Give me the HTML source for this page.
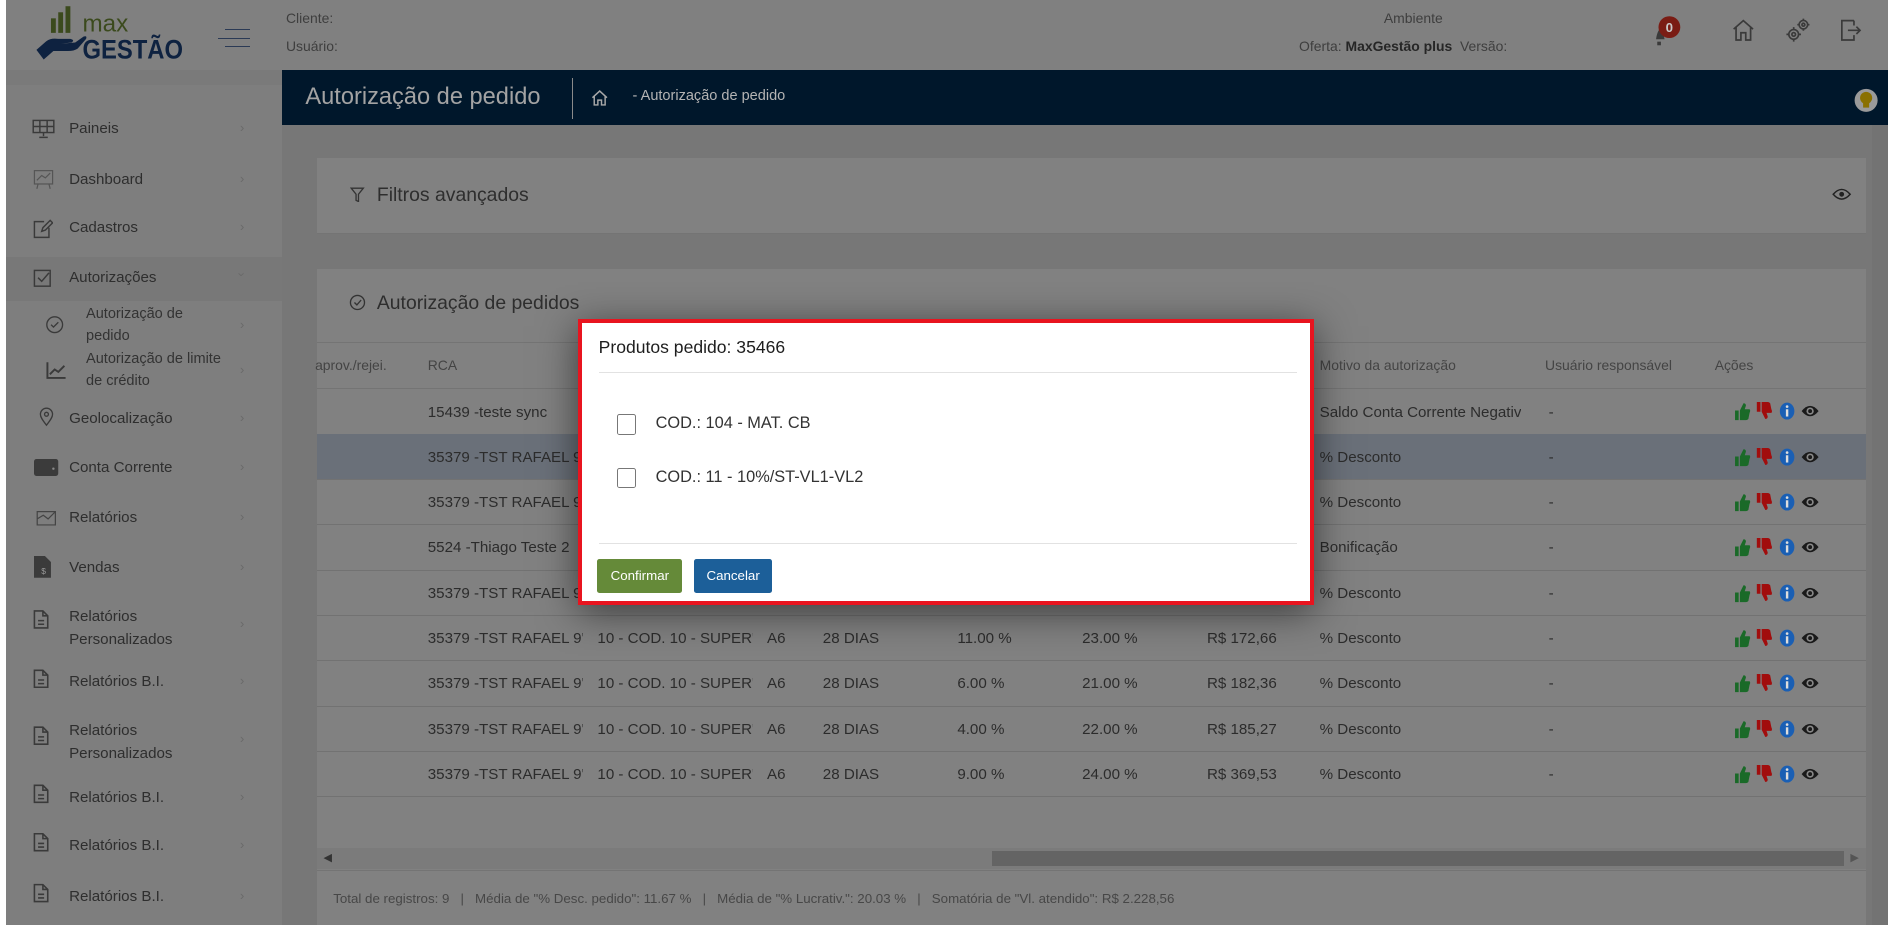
<!DOCTYPE html>
<html><head><meta charset="utf-8">
<style>
html,body{margin:0;padding:0;background:#fff;overflow:hidden;width:1894px;height:940px}
#w{position:absolute;left:0;top:0;width:1563px;height:776px;zoom:1.2118;font-family:"Liberation Sans",sans-serif;color:#2e2e2e}
.a{position:absolute}
.t{position:absolute;white-space:nowrap}
.sb{font-size:12.5px;color:#2e2e2e}
.chev{position:absolute;left:198px;font-size:11px;color:#6a6a6a}
.ico{position:absolute;left:26px}
.row{position:absolute;left:262px;width:1278px;height:37px;border-bottom:1px solid #727272;font-size:12.5px;color:#2c2c2c}
.row span{position:absolute;top:12px;white-space:nowrap;overflow:hidden}
.act{position:absolute;left:1170px;top:11px;width:80px;height:16px}
</style></head><body>
<div id="w">
<div class="a" style="left:5px;top:0;width:1553px;height:763px;background:#777"></div>
<div class="a" style="left:5px;top:0;width:1553px;height:58px;background:#808080"></div>
<div class="a" style="left:5px;top:58px;width:228px;height:705px;background:#7e7e7e"></div>
<div class="a" style="left:5px;top:58px;width:228px;height:12px;background:#7a7a7a"></div>
<div class="a" style="left:5px;top:212px;width:228px;height:36px;background:#787878"></div>
<div class="a" style="left:1545px;top:103px;width:13px;height:660px;background:#737373"></div>

<svg class="a" style="left:28px;top:4px" width="130" height="48" viewBox="0 0 130 48">
<rect x="14" y="11" width="4" height="12" fill="#3b4a1d"/><rect x="20" y="6" width="4" height="17" fill="#3b4a1d"/><rect x="26" y="1" width="4" height="22" fill="#3b4a1d"/>
<path d="M2 37 L10 30 Q14 27 20 28 L30 28 Q34 29 31 31 L22 32 L34 31 L41 26 Q44 25 43 28 L36 36 Q33 38 28 38 L16 38 L8 45 Z" fill="#0e2240"/>
<text x="40" y="22" font-family="Liberation Sans" font-size="20" fill="#3b4a1d">max</text>
<text x="40" y="44" font-family="Liberation Sans" font-size="22" font-weight="bold" fill="#0e2240" textLength="83" lengthAdjust="spacingAndGlyphs">GESTÃO</text>
</svg>
<div class="a" style="left:186px;top:24px;width:20px;height:1px;background:#2b3a55"></div>
<div class="a" style="left:180px;top:31px;width:26px;height:1px;background:#2b3a55"></div>
<div class="a" style="left:186px;top:38px;width:20px;height:1px;background:#2b3a55"></div>

<div class="t" style="left:236px;top:8px;font-size:11.5px;color:#3e3e3e">Cliente:</div>
<div class="t" style="left:236px;top:31px;font-size:11.5px;color:#3e3e3e">Usuário:</div>
<div class="t" style="left:1142px;top:8px;font-size:11.5px;color:#3e3e3e">Ambiente</div>
<div class="t" style="left:1072px;top:31px;font-size:11.5px;color:#3e3e3e">Oferta: <b style="color:#262626">MaxGestão plus</b>&nbsp; Versão:</div>

<svg class="a" style="left:1362px;top:12px" width="30" height="30" viewBox="0 0 30 30"><path d="M5 20 Q6 12 10 10 L12 20 Z" fill="#3a3a3a"/><rect x="6" y="22" width="3" height="3" fill="#3a3a3a"/><circle cx="16" cy="10" r="9" fill="#7a1c14"/><text x="16" y="14" font-size="11" font-weight="bold" fill="#c8c8c8" text-anchor="middle" font-family="Liberation Sans">0</text></svg>
<svg class="a" style="left:1428px;top:14px" width="22" height="22" viewBox="0 0 22 22" fill="none" stroke="#3a3a3a" stroke-width="1.4"><path d="M3 10 L11 3 L19 10 M5 8 V19 H9 V13 H13 V19 H17 V8"/></svg>
<svg class="a" style="left:1472px;top:12px" width="24" height="24" viewBox="0 0 24 24" fill="none" stroke="#3a3a3a" stroke-width="1.4"><circle cx="8" cy="16" r="4"/><circle cx="8" cy="16" r="1.5"/><circle cx="16" cy="8" r="3.5"/><circle cx="16" cy="8" r="1.2"/><path d="M8 10v2M8 20v2M2 16h2M12 16h2M16 3v1.5M16 11.5V13M11 8h1.5M19.5 8H21"/></svg>
<svg class="a" style="left:1516px;top:14px" width="22" height="22" viewBox="0 0 22 22" fill="none" stroke="#3a3a3a" stroke-width="1.4"><path d="M14 3 H4 V19 H14 V15 M14 7 V3 M9 11 H19 M16 8 L19 11 L16 14"/></svg>

<div class="a" style="left:233px;top:58px;width:1325px;height:45px;background:#00172b"></div>
<div class="t" style="left:252px;top:69px;font-size:19.5px;color:#a3a3a3">Autorização de pedido</div>
<div class="a" style="left:472px;top:64px;width:1px;height:34px;background:#8a8a8a"></div>
<svg class="a" style="left:487px;top:73px" width="16" height="16" viewBox="0 0 16 16" fill="none" stroke="#a8a8a8" stroke-width="1.2"><path d="M2 8 L8 2.5 L14 8 M3.5 7 V14 H6.5 V10 H9.5 V14 H12.5 V7"/></svg>
<div class="t" style="left:522px;top:73px;font-size:12px;color:#b4b4b4">- Autorização de pedido</div>
<svg class="a" style="left:1530px;top:72px" width="20" height="22" viewBox="0 0 20 22"><circle cx="10" cy="11" r="9.5" fill="#9a9a9a"/><circle cx="10" cy="9" r="5" fill="#8a7000"/><rect x="7.5" y="12" width="5" height="5" fill="#8a7000"/></svg>

<div class="t sb" style="left:57px;top:99px">Paineis</div><div class="chev" style="top:99px">›</div>
<svg class="ico" style="top:97px" width="20" height="20" viewBox="0 0 20 20" fill="none" stroke="#3a3a3a" stroke-width="1.2"><rect x="1" y="2" width="17" height="10"/><path d="M6.5 2v10M12.5 2v10M1 7h17M9.5 12v3M6 16h7"/></svg>
<div class="t sb" style="left:57px;top:141px">Dashboard</div><div class="chev" style="top:141px">›</div>
<svg class="ico" style="top:138px" width="20" height="20" viewBox="0 0 20 20" fill="none" stroke="#555" stroke-width="1"><rect x="2" y="3" width="15" height="11"/><path d="M4 11 L8 7 L11 9 L15 5M5 14 L4 18M14 14 L15 18"/></svg>
<div class="t sb" style="left:57px;top:181px">Cadastros</div><div class="chev" style="top:181px">›</div>
<svg class="ico" style="top:180px" width="18" height="18" viewBox="0 0 18 18" fill="none" stroke="#3a3a3a" stroke-width="1.2"><path d="M10 3H2v13h12V8M8 11l1-3 6-6 2 2-6 6z"/></svg>
<div class="t sb" style="left:57px;top:222px">Autorizações</div><div class="chev" style="top:220px;transform:rotate(90deg)">›</div>
<svg class="ico" style="top:221px" width="18" height="18" viewBox="0 0 18 18" fill="none" stroke="#3a3a3a" stroke-width="1.2"><rect x="2" y="2" width="13" height="13"/><path d="M5 8l3 3 6-7"/></svg>
<div class="t sb" style="left:71px;top:251px;font-size:12px;line-height:18px;color:#333">Autorização de<br>pedido</div><div class="chev" style="top:262px">›</div>
<svg class="a" style="left:37px;top:260px" width="16" height="16" viewBox="0 0 16 16" fill="none" stroke="#3a3a3a" stroke-width="1.1"><circle cx="8" cy="8" r="6.5"/><path d="M5 8l2 2 4-4"/></svg>
<div class="t sb" style="left:71px;top:288px;font-size:12px;line-height:18px;color:#333">Autorização de limite<br>de crédito</div><div class="chev" style="top:299px">›</div>
<svg class="a" style="left:37px;top:298px" width="18" height="16" viewBox="0 0 18 16" fill="none" stroke="#3a3a3a" stroke-width="1.6"><path d="M2 1v13h15M4 11l4-4 3 2 5-5"/></svg>
<div class="t sb" style="left:57px;top:338px">Geolocalização</div><div class="chev" style="top:338px">›</div>
<svg class="ico" style="left:31px;top:336px" width="14" height="16" viewBox="0 0 14 16" fill="none" stroke="#3a3a3a" stroke-width="1.1"><path d="M7 15 C3 10 2 8 2 6 A5 5 0 0 1 12 6 C12 8 11 10 7 15Z"/><circle cx="7" cy="6" r="1.6"/></svg>
<div class="t sb" style="left:57px;top:379px">Conta Corrente</div><div class="chev" style="top:379px">›</div>
<svg class="ico" style="left:28px;top:379px" width="22" height="15" viewBox="0 0 22 15"><rect x="0" y="0" width="20" height="14" rx="2" fill="#3b3b3b"/><circle cx="16" cy="8" r="1" fill="#888"/></svg>
<div class="t sb" style="left:57px;top:420px">Relatórios</div><div class="chev" style="top:420px">›</div>
<svg class="ico" style="left:30px;top:419px" width="18" height="16" viewBox="0 0 18 16" fill="none" stroke="#444" stroke-width="1"><path d="M1 3h15v11H1zM1 9l5-3 4 3 6-6"/></svg>
<div class="t sb" style="left:57px;top:461px">Vendas</div><div class="chev" style="top:461px">›</div>
<svg class="ico" style="left:28px;top:459px" width="14" height="18" viewBox="0 0 14 18"><path d="M0 0h9l5 5v13H0z" fill="#3b3b3b"/><text x="6" y="15" font-size="7" fill="#999" font-family="Liberation Sans">$</text></svg>
<div class="t sb" style="left:57px;top:499px;line-height:19px">Relatórios<br>Personalizados</div><div class="chev" style="top:508px">›</div>
<div class="t sb" style="left:57px;top:555px">Relatórios B.I.</div><div class="chev" style="top:555px">›</div>
<div class="t sb" style="left:57px;top:593px;line-height:19px">Relatórios<br>Personalizados</div><div class="chev" style="top:603px">›</div>
<div class="t sb" style="left:57px;top:651px">Relatórios B.I.</div><div class="chev" style="top:651px">›</div>
<div class="t sb" style="left:57px;top:691px">Relatórios B.I.</div><div class="chev" style="top:691px">›</div>
<div class="t sb" style="left:57px;top:733px">Relatórios B.I.</div><div class="chev" style="top:733px">›</div>
<svg class="a" style="left:26px;top:500px" width="16" height="260" viewBox="0 0 16 260" fill="none" stroke="#3a3a3a" stroke-width="1.3">
<g><path d="M2 4h7l4 4v10H2zM9 4v4h4M5 12h5M5 15h5"/></g>
<g transform="translate(0,49)"><path d="M2 4h7l4 4v10H2zM9 4v4h4M5 12h5M5 15h5"/></g>
<g transform="translate(0,96)"><path d="M2 4h7l4 4v10H2zM9 4v4h4M5 12h5M5 15h5"/></g>
<g transform="translate(0,144)"><path d="M2 4h7l4 4v10H2zM9 4v4h4M5 12h5M5 15h5"/></g>
<g transform="translate(0,184)"><path d="M2 4h7l4 4v10H2zM9 4v4h4M5 12h5M5 15h5"/></g>
<g transform="translate(0,226)"><path d="M2 4h7l4 4v10H2zM9 4v4h4M5 12h5M5 15h5"/></g>
</svg>

<div class="a" style="left:262px;top:130px;width:1278px;height:62px;background:#818181;border-bottom:1px solid #747474"></div>
<svg class="a" style="left:289px;top:154px" width="12" height="13" viewBox="0 0 12 13" fill="none" stroke="#333" stroke-width="1.1"><path d="M1 1h10L7 6v6L5 11V6z"/></svg>
<div class="t" style="left:311px;top:152px;font-size:16px;color:#2e2e2e">Filtros avançados</div>
<svg class="a" style="left:1512px;top:154px" width="16" height="12" viewBox="0 0 16 12" fill="none" stroke="#222" stroke-width="1.2"><path d="M1 6 Q8 -2 15 6 Q8 14 1 6Z"/><circle cx="8" cy="6" r="1.4" fill="#222"/></svg>

<div class="a" style="left:262px;top:222px;width:1278px;height:541px;background:#818181"></div>
<svg class="a" style="left:288px;top:243px" width="14" height="14" viewBox="0 0 14 14" fill="none" stroke="#333" stroke-width="1.1"><circle cx="7" cy="7" r="5.8"/><path d="M4.5 7l2 2 3.5-4"/></svg>
<div class="t" style="left:311px;top:241px;font-size:16px;color:#2e2e2e">Autorização de pedidos</div>
<div class="a" style="left:262px;top:282px;width:1278px;height:1px;background:#747474"></div>
<div class="a" style="left:262px;top:320px;width:1278px;height:1px;background:#747474"></div>
<div class="t" style="left:260px;top:295px;font-size:11.5px;color:#444">aprov./rejei.</div>
<div class="t" style="left:353px;top:295px;font-size:11.5px;color:#444">RCA</div>
<div class="t" style="left:1089px;top:295px;font-size:11.5px;color:#444">Motivo da autorização</div>
<div class="t" style="left:1275px;top:295px;font-size:11.5px;color:#444">Usuário responsável</div>
<div class="t" style="left:1415px;top:295px;font-size:11.5px;color:#444">Ações</div>

<div id="rows"></div>
<svg width="0" height="0" style="position:absolute"><defs>
<g id="acts">
<path d="M0 7h3v8H0zM4 7 L7 1 Q9 1 9 3 L8 6 H12 Q13 7 12 9 L11 14 Q10 15 9 15 H4z" fill="#1a6a28"/>
<g transform="translate(18,0)"><path d="M0 0h3v8H0zM4 0 H9 Q10 0 11 1 L12 6 Q13 8 12 9 H8 L9 12 Q9 14 7 14 L4 8z" fill="#a10d0d"/></g>
<g transform="translate(37,0)"><ellipse cx="6" cy="7.5" rx="6" ry="7" fill="#1a5fb4"/><rect x="5" y="6" width="2" height="6" fill="#ddd"/><circle cx="6" cy="3.8" r="1.1" fill="#ddd"/></g>
<g transform="translate(55,2)"><path d="M0 5.5 Q7 -3 14 5.5 Q7 14 0 5.5Z" fill="#1a1a1a"/><circle cx="7" cy="5.5" r="3" fill="#888"/><circle cx="7" cy="5.5" r="1.6" fill="#1a1a1a"/></g>
</g></defs></svg>

<div class="a" style="left:262px;top:700px;width:1278px;height:17px;background:#7b7b7b"></div>
<div class="a" style="left:819px;top:702px;width:703px;height:13px;background:#646464"></div>
<div class="t" style="left:267px;top:702px;font-size:9px;color:#333">◀</div>
<div class="t" style="left:1527px;top:702px;font-size:9px;color:#555">▶</div>
<div class="a" style="left:262px;top:718px;width:1278px;height:1px;background:#747474"></div>
<div class="t" style="left:275px;top:735px;font-size:11px;color:#474747">Total de registros: 9 &nbsp; | &nbsp; Média de "% Desc. pedido": 11.67 % &nbsp; | &nbsp; Média de "% Lucrativ.": 20.03 % &nbsp; | &nbsp; Somatória de "Vl. atendido": R$ 2.228,56</div>

<div class="a" style="left:477px;top:263px;width:601px;height:230px;background:#fff;border:4px solid #e8141f;box-shadow:0 6px 30px rgba(0,0,0,.55)"></div>
<div class="t" style="left:494px;top:278px;font-size:14.5px;color:#1e1e1e">Produtos pedido: 35466</div>
<div class="a" style="left:494px;top:307px;width:576px;height:1px;background:#e2e2e2"></div>
<div class="a" style="left:509px;top:342px;width:14px;height:15px;border:1.5px solid #777;border-radius:2px"></div>
<div class="t" style="left:541px;top:342px;font-size:13.5px;color:#333">COD.: 104 - MAT. CB</div>
<div class="a" style="left:509px;top:386px;width:14px;height:15px;border:1.5px solid #777;border-radius:2px"></div>
<div class="t" style="left:541px;top:386px;font-size:13.5px;color:#333">COD.: 11 - 10%/ST-VL1-VL2</div>
<div class="a" style="left:494px;top:448px;width:576px;height:1px;background:#e2e2e2"></div>
<div class="a" style="left:493px;top:461px;width:70px;height:28px;background:#658a39;border-radius:2px;color:#fff;font-size:11px;text-align:center;line-height:28px">Confirmar</div>
<div class="a" style="left:573px;top:461px;width:64px;height:28px;background:#1c5f99;border-radius:2px;color:#fff;font-size:11px;text-align:center;line-height:28px">Cancelar</div>
</div>
<script>
(function(){
var d=[["15439 -teste sync","","","","","","","Saldo Conta Corrente Negativ"],
["35379 -TST RAFAEL 9","","","","","","","% Desconto"],
["35379 -TST RAFAEL 9","","","","","","","% Desconto"],
["5524 -Thiago Teste 2","","","","","","","Bonificação"],
["35379 -TST RAFAEL 9","","","","","","","% Desconto"],
["35379 -TST RAFAEL 9'","10 - COD. 10 - SUPER'","A6","28 DIAS","11.00 %","23.00 %","R$ 172,66","% Desconto"],
["35379 -TST RAFAEL 9'","10 - COD. 10 - SUPER'","A6","28 DIAS","6.00 %","21.00 %","R$ 182,36","% Desconto"],
["35379 -TST RAFAEL 9'","10 - COD. 10 - SUPER'","A6","28 DIAS","4.00 %","22.00 %","R$ 185,27","% Desconto"],
["35379 -TST RAFAEL 9'","10 - COD. 10 - SUPER'","A6","28 DIAS","9.00 %","24.00 %","R$ 369,53","% Desconto"]];
var xs=[91,231,371,417,528,631,734,827],ws=[128,128,40,100,100,100,90,172],h="";
for(var i=0;i<9;i++){var ty=321+i*37.4;
h+='<div class="row" style="top:'+ty+'px;'+(i==1?'background:#6a7079;':'')+'">';
for(var j=0;j<8;j++)if(d[i][j])h+='<span style="left:'+xs[j]+'px;max-width:'+ws[j]+'px">'+d[i][j]+'</span>';
h+='<span style="left:1016px">-</span><svg class="act" viewBox="0 0 80 16"><use href="#acts"/></svg></div>';}
document.getElementById('rows').outerHTML=h;
})();
</script>
</body></html>
